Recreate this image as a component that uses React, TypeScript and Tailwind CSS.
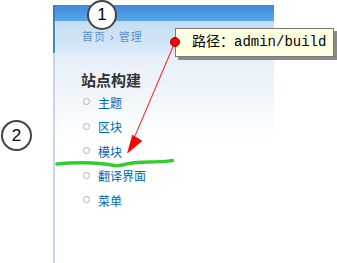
import React from "react";

const cjk = { fontFamily: '"Liberation Sans", "Noto Sans CJK SC", sans-serif' };

function Bullet() {
  return <span className="inline-block w-[7px] h-[7px] rounded-full border border-[#b0b0b0] bg-white mr-[8px] -translate-y-[2px]" />;
}

const items = ["主题", "区块", "模块", "翻译界面", "菜单"];

export default function App() {
  return (
    <div className="relative w-[337px] h-[263px] bg-white overflow-hidden" style={cjk}>
      <div className="ml-[53px] w-[221px] h-[263px] pt-[5px] flex flex-col">
        <div className="h-[16px] bg-[linear-gradient(to_bottom,#3b8ada,#5aa7e8)] border-l-2 border-[#2b7cd0]" />
        <div className="h-[32px] flex items-center border-l-2 border-[#3a86d2] bg-[linear-gradient(to_bottom,#c4ddf3,#d9e9f8)]">
          <div className="h-full w-[1px] bg-[#e2eefa]" />
          <span className="ml-[26px] text-[11px] tracking-[1px] text-[#5c90cc]">首页 › 管理</span>
        </div>
        <div className="flex-1 border-l-2 border-[#c4d8ea] bg-[linear-gradient(to_bottom,#e5eef8,#ffffff_90px)] pl-[26px] pt-[19px]">
          <div className="text-[15px] leading-[18px] font-bold text-[#333333]">站点构建</div>
          <div className="pt-[1px]">
            {items.map((t, i) => (
              <div key={t} className={`flex items-center pl-[2px] text-[12px] text-[#0066b8] ${i % 2 === 0 ? "h-[25.5px]" : "h-[23.5px]"}`}>
                <Bullet />
                <span>{t}</span>
              </div>
            ))}
          </div>
        </div>
      </div>

      <svg className="absolute left-0 top-0" width="337" height="263">
        <path d="M57,164 C75,162 95,163 105,164 S115,167 122,165 S135,162 150,162 S168,161 172.5,160.5" stroke="#33cc33" strokeWidth="3.5" fill="none" strokeLinecap="round" />
        <line x1="175" y1="42" x2="135" y2="136" stroke="#ff3030" strokeWidth="1.1" />
        <polygon points="127.5,153 132.5,135 142,141" fill="#ff0000" stroke="#cc0000" strokeWidth="0.5" />
      </svg>

      <div className="absolute left-[178px] top-[31px] w-[159px] h-[29px] bg-[#8a8a8a]" />
      <div className="absolute left-[175px] top-[28px] w-[159px] h-[29px] bg-[#ffffe1] border border-[#7a7a7a] flex items-center pl-[16px] text-[14px] text-black" style={{ fontFamily: '"Liberation Mono", "Noto Sans CJK SC", monospace' }}>
        路径：admin/build
      </div>
      <div className="absolute left-[170px] top-[37px] w-[10px] h-[10px] rounded-full bg-[#ff0000] border border-[#a00000]" />

      <div className="absolute left-[87px] top-[0px] w-[30px] h-[30px] rounded-full bg-white border-2 border-[#444444] flex items-center justify-center text-[17px] text-black">1</div>
      <div className="absolute left-[1px] top-[120px] w-[31px] h-[31px] rounded-full bg-white border-2 border-[#444444] flex items-center justify-center text-[17px] text-black">2</div>
    </div>
  );
}
